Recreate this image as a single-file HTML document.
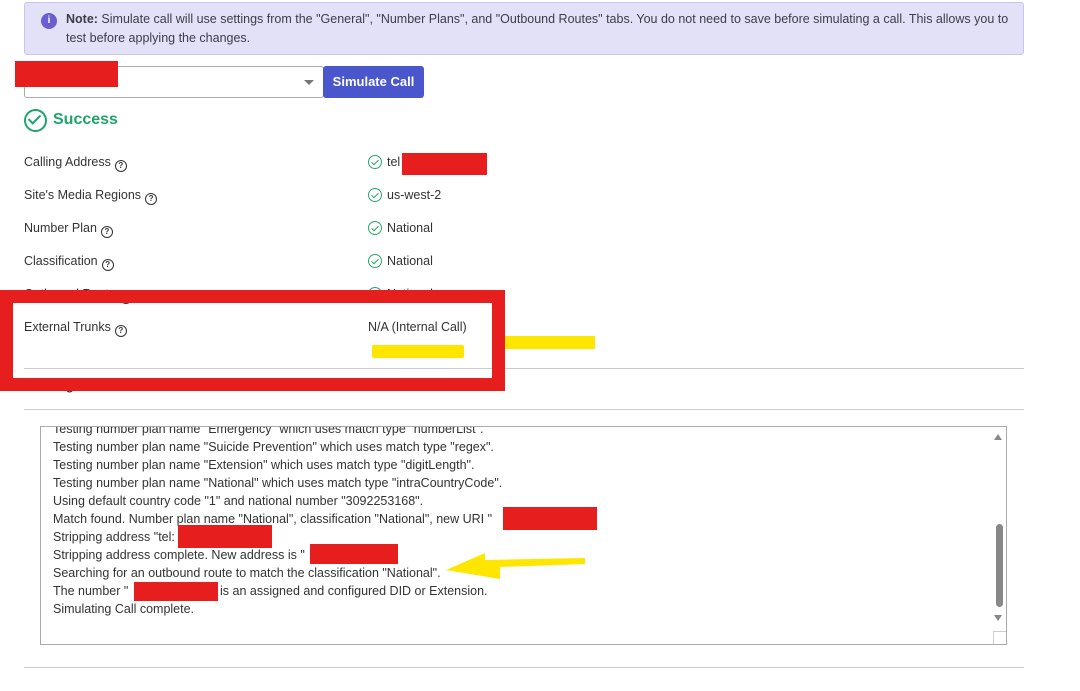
<!DOCTYPE html>
<html><head><meta charset="utf-8"><style>
*{margin:0;padding:0;box-sizing:border-box}
body{width:1080px;height:691px;background:#fff;font-family:"Liberation Sans",sans-serif;color:#333;position:relative;overflow:hidden}
.a{position:absolute}
.note{left:24px;top:2px;width:1000px;height:53px;background:#e3e1f7;border:1px solid #c9c5ef;border-radius:3px;font-size:12.5px;line-height:19px;padding:7px 0 0 41px;color:#3c3c4a}
.lbl{left:24px;font-size:12.5px;color:#333}
.q{display:inline-block;width:12px;height:12px;border:1.3px solid #333;border-radius:50%;font-size:8px;line-height:10px;text-align:center;font-weight:bold;margin-left:4px;vertical-align:-2px}
.val{left:368px;font-size:12.5px;color:#333}
.ck{display:inline-block;width:14px;height:14px;border:1.5px solid #2aa56a;border-radius:50%;vertical-align:-3px;margin-right:5px;position:relative}
.ck:after{content:"";position:absolute;left:3.5px;top:1.5px;width:3px;height:6px;border:solid #2aa56a;border-width:0 1.5px 1.5px 0;transform:rotate(45deg)}
.red{background:#e61e1e}
.log{left:40px;top:426px;width:967px;height:219px;border:1px solid #aaa;overflow:hidden}
.log div{position:absolute;left:12px;font-size:12.5px;color:#333;white-space:nowrap}
</style></head><body>
<div class="a note"><span class="a" style="left:16px;top:10px;width:16px;height:16px;border-radius:50%;background:#6a5fd0;color:#fff;font-size:10px;font-weight:bold;text-align:center;line-height:16px">i</span><b>Note:</b> Simulate call will use settings from the "General", "Number Plans", and "Outbound Routes" tabs. You do not need to save before simulating a call. This allows you to test before applying the changes.</div>
<div class="a" style="left:24px;top:66px;width:300px;height:32px;border:1px solid #aaa;border-radius:3px"></div>
<div class="a" style="left:304px;top:80px;border-left:5px solid transparent;border-right:5px solid transparent;border-top:5px solid #777"></div>
<div class="a red" style="left:15px;top:61px;width:103px;height:26px"></div>
<div class="a" style="left:323px;top:66px;width:101px;height:32px;background:#4a56cc;border-radius:3px;color:#fff;font-weight:bold;font-size:13px;text-align:center;line-height:32px">Simulate Call</div>
<div class="a" style="left:24px;top:109px;width:23px;height:23px;border:2px solid #1fa56b;border-radius:50%"></div>
<div class="a" style="left:31px;top:112px;width:7px;height:12px;border:solid #1fa56b;border-width:0 2.2px 2.2px 0;transform:rotate(45deg)"></div>
<div class="a" style="left:53px;top:111px;font-size:16px;font-weight:bold;color:#1fa56b">Success</div>
<div class="a lbl" style="top:155px">Calling Address<span class="q">?</span></div>
<div class="a lbl" style="top:188px">Site's Media Regions<span class="q">?</span></div>
<div class="a lbl" style="top:221px">Number Plan<span class="q">?</span></div>
<div class="a lbl" style="top:254px">Classification<span class="q">?</span></div>
<div class="a val" style="top:155px"><span class="ck"></span>tel</div>
<div class="a red" style="left:402px;top:153px;width:85px;height:22px"></div>
<div class="a val" style="top:188px"><span class="ck"></span>us-west-2</div>
<div class="a val" style="top:221px"><span class="ck"></span>National</div>
<div class="a val" style="top:254px"><span class="ck"></span>National</div>
<div class="a lbl" style="top:287px">Outbound Route<span class="q">?</span></div>
<div class="a val" style="top:287px"><span class="ck"></span>National</div>
<div class="a lbl" style="top:320px">External Trunks<span class="q">?</span></div>
<div class="a val" style="top:320px">N/A (Internal Call)</div>
<div class="a" style="left:24px;top:368px;width:1000px;height:1px;background:#ccc"></div>
<div class="a" style="left:50px;top:378px;font-size:13px;font-weight:bold;color:#333">Log</div>
<div class="a" style="left:24px;top:409px;width:1000px;height:1px;background:#ccc"></div>
<div class="a" style="left:0;top:290px;width:505px;height:101px;border:13px solid #e61e1e;background:transparent"></div>
<div class="a" style="left:372px;top:345px;width:92px;height:13px;background:#ffe600;border-radius:2px"></div>
<div class="a" style="left:505px;top:336px;width:90px;height:13px;background:#ffe600"></div>
<div class="a log">
<div style="top:-5px">Testing number plan name "Emergency" which uses match type "numberList".</div>
<div style="top:13px">Testing number plan name "Suicide Prevention" which uses match type "regex".</div>
<div style="top:31px">Testing number plan name "Extension" which uses match type "digitLength".</div>
<div style="top:49px">Testing number plan name "National" which uses match type "intraCountryCode".</div>
<div style="top:67px">Using default country code "1" and national number "3092253168".</div>
<div style="top:85px">Match found. Number plan name "National", classification "National", new URI "</div>
<div style="top:103px">Stripping address "tel:</div>
<div style="top:121px">Stripping address complete. New address is "</div>
<div style="top:139px">Searching for an outbound route to match the classification "National".</div>
<div style="top:157px">The number "</div>
<div style="top:157px;left:179px">is an assigned and configured DID or Extension.</div>
<div style="top:175px">Simulating Call complete.</div>
<span class="a" style="right:4px;top:7px;border-left:4px solid transparent;border-right:4px solid transparent;border-bottom:6px solid #888"></span>
<span class="a" style="right:3px;top:97px;width:7px;height:83px;background:#888;border-radius:4px"></span>
<span class="a" style="right:4px;top:188px;border-left:4px solid transparent;border-right:4px solid transparent;border-top:6px solid #888"></span>
<span class="a" style="right:0;bottom:0;width:13px;height:13px;border-left:1px solid #ccc;border-top:1px solid #ccc"></span>
</div>
<div class="a red" style="left:503px;top:507px;width:94px;height:23px"></div>
<div class="a red" style="left:178px;top:525px;width:94px;height:23px"></div>
<div class="a red" style="left:310px;top:544px;width:88px;height:20px"></div>
<div class="a red" style="left:134px;top:582px;width:84px;height:19px"></div>
<svg class="a" style="left:440px;top:545px" width="150" height="40"><path d="M6 25 L45 8 L45 15 L145 13 L145 19 L60 22 L60 34 Z" fill="#ffe600"/></svg>
<div class="a" style="left:24px;top:667px;width:1000px;height:1px;background:#ccc"></div>
</body></html>
